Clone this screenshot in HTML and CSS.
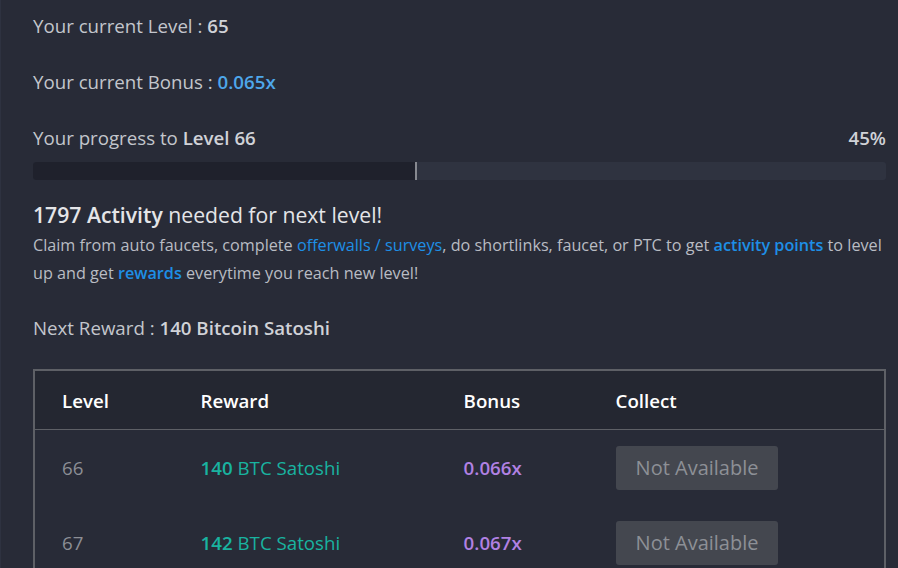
FILE: index.html
```html
<!DOCTYPE html>
<html>
<head>
<meta charset="utf-8">
<link rel="stylesheet" href="styles.css">
</head>
<body>
<main class="page">
  <p class="stat">Your current Level : <b class="val">65</b></p>
  <p class="stat">Your current Bonus : <b class="val blue">0.065x</b></p>
  <div class="progress-head">
    <span>Your progress to <b class="val">Level 66</b></span>
    <b class="val">45%</b>
  </div>
  <div class="bar"><div class="fill" style="width:45%"></div></div>
  <h3 class="need"><b>1797 Activity</b> needed for next level!</h3>
  <p class="info">Claim from auto faucets, complete <a class="link">offerwalls / surveys</a>, do shortlinks, faucet, or PTC to get <a class="link strong">activity points</a> to level up and get <a class="link strong">rewards</a> everytime you reach new level!</p>
  <p class="stat next">Next Reward : <b class="val">140 Bitcoin Satoshi</b></p>
  <table class="levels">
    <colgroup><col class="c1"><col class="c2"><col class="c3"><col class="c4"></colgroup>
    <thead>
      <tr><th>Level</th><th>Reward</th><th>Bonus</th><th>Collect</th></tr>
    </thead>
    <tbody>
      <tr><td class="lvl">66</td><td class="rew"><b>140</b> BTC Satoshi</td><td class="bon">0.066x</td><td><button class="na">Not Available</button></td></tr>
      <tr><td class="lvl">67</td><td class="rew"><b>142</b> BTC Satoshi</td><td class="bon">0.067x</td><td><button class="na">Not Available</button></td></tr>
    </tbody>
  </table>
</main>
</body>
</html>
```
FILE: styles.css
```css
html, body {
  margin: 0;
  padding: 0;
  background: #282b37;
  height: 100%;
  overflow: hidden;
}
body {
  font-family: "Open Sans", "Noto Sans", sans-serif;
  color: #c3c6cc;
  border-left: 1px solid #2e3240;
}
.page {
  padding: 12px 12px 0 32px;
}
.stat {
  margin: 0 0 28px;
  font-size: 18.7px;
  line-height: 28px;
}
.val {
  font-weight: 600;
  color: #d0d2d7;
}
.blue {
  color: #4ea7ea;
}
.progress-head {
  display: flex;
  justify-content: space-between;
  font-size: 18.7px;
  line-height: 28px;
}
.bar {
  margin-top: 10px;
  height: 18px;
  background: #2f3340;
  border-radius: 3px;
  overflow: hidden;
}
.fill {
  height: 100%;
  background: #1f212c;
  border-right: 2px solid #878990;
  box-sizing: border-box;
}
.need {
  margin: 21px 0 0;
  font-size: 21.2px;
  line-height: 28px;
  font-weight: 400;
  color: #e4e5e8;
}
.need b {
  font-weight: 600;
}
.info {
  margin: 2px 0 0;
  font-size: 16.2px;
  line-height: 28px;
  color: #b9bcc3;
}
.link {
  color: #1e8fe6;
}
.strong {
  font-weight: 600;
}
.next {
  margin: 27px 0 27px;
}
.levels {
  width: 100%;
  border-collapse: collapse;
  table-layout: fixed;
  border: 2px solid #5e6066;
  border-bottom: none;
}
.c1 { width: 139.6px; }
.c2 { width: 263px; }
.c3 { width: 152px; }
.levels th {
  background: #242731;
  text-align: left;
  font-size: 18.7px;
  font-weight: 600;
  color: #ffffff;
  height: 58px;
  padding: 0 0 0 27px;
  border-bottom: 1px solid #5e6066;
}
.levels td {
  height: 75px;
  padding: 0 0 0 27px;
  font-size: 18.7px;
}
.lvl {
  color: #8c8e95;
}
.rew {
  color: #19b3a0;
}
.rew b {
  font-weight: 600;
}
.bon {
  color: #b181e3;
  font-weight: 600;
}
.na {
  font-family: inherit;
  font-size: 20px;
  color: #8d9096;
  background: #44474f;
  border: none;
  border-radius: 3px;
  height: 44px;
  padding: 0 20px;
}
```
